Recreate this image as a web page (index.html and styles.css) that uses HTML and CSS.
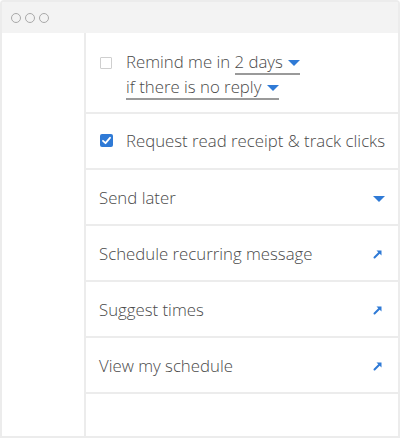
FILE: index.html
```html
<!DOCTYPE html>
<html>
<head>
<meta charset="utf-8">
<link rel="stylesheet" href="styles.css">
</head>
<body>
<div class="window">
  <div class="titlebar">
    <span class="dot"></span><span class="dot"></span><span class="dot"></span>
  </div>
  <div class="body">
    <div class="sidebar"></div>
    <div class="panel">
      <div class="row remind">
        <span class="box"></span>
        <div class="remind-text">
          <div class="line">Remind me in <span class="select">2 days <span class="caret"></span></span></div>
          <div class="line"><span class="select">if there is no reply <span class="caret"></span></span></div>
        </div>
      </div>
      <div class="row check">
        <span class="box checked">
          <svg width="13" height="13" viewBox="0 0 13 13"><path d="M3 6.8 L5.5 9.2 L10 3.8" fill="none" stroke="#fff" stroke-width="1.8" stroke-linecap="round" stroke-linejoin="round"/></svg>
        </span>
        <span class="label">Request read receipt &amp; track clicks</span>
      </div>
      <div class="row item">
        <span class="label">Send later</span>
        <span class="caret big"></span>
      </div>
      <div class="row item">
        <span class="label">Schedule recurring message</span>
        <svg class="ext" width="10" height="10" viewBox="0 0 10 10"><path d="M1.5 8.5 L7 3" stroke="#2f7ad6" stroke-width="2" stroke-linecap="round"/><path d="M3.5 1.5 H8.5 V6.5 Z" fill="#2f7ad6"/></svg>
      </div>
      <div class="row item">
        <span class="label">Suggest times</span>
        <svg class="ext" width="10" height="10" viewBox="0 0 10 10"><path d="M1.5 8.5 L7 3" stroke="#2f7ad6" stroke-width="2" stroke-linecap="round"/><path d="M3.5 1.5 H8.5 V6.5 Z" fill="#2f7ad6"/></svg>
      </div>
      <div class="row item">
        <span class="label">View my schedule</span>
        <svg class="ext" width="10" height="10" viewBox="0 0 10 10"><path d="M1.5 8.5 L7 3" stroke="#2f7ad6" stroke-width="2" stroke-linecap="round"/><path d="M3.5 1.5 H8.5 V6.5 Z" fill="#2f7ad6"/></svg>
      </div>
      <div class="filler"></div>
    </div>
  </div>
</div>
</body>
</html>
```

FILE: styles.css
```css
* { box-sizing: border-box; }
html, body { margin: 0; padding: 0; background: #fff; }
body {
  font-family: "Open Sans", "Liberation Sans", sans-serif;
  font-weight: 300;
  color: #4a4a4a;
  font-size: 16.8px;
}
.window {
  width: 400px;
  height: 438px;
  border: 2px solid #ececec;
  border-radius: 4px 4px 0 0;
  display: flex;
  flex-direction: column;
  overflow: hidden;
}
.titlebar {
  height: 31px;
  flex: none;
  background: #f3f3f3;
  display: flex;
  align-items: center;
  gap: 4px;
  padding-left: 9px;
  padding-top: 1px;
}
.dot {
  width: 10px;
  height: 10px;
  border: 1.5px solid #a9a9a9;
  border-radius: 50%;
}
.body {
  flex: 1;
  display: flex;
}
.sidebar {
  width: 84px;
  border-right: 2px solid #ececec;
  flex: none;
}
.panel {
  flex: 1;
  min-width: 0;
  display: flex;
  flex-direction: column;
}
.row {
  display: flex;
  align-items: center;
  border-bottom: 2px solid #ececec;
  padding: 1px 13px 0;
}
.label { white-space: nowrap; }
.remind {
  height: 81px;
  align-items: flex-start;
  padding-top: 16px;
}
.remind .box { margin-top: 8px; }
.remind-text { margin-left: 14px; }
.line {
  line-height: 25px;
  height: 25px;
  white-space: nowrap;
}
.select {
  display: inline-block;
  line-height: 22px;
  border-bottom: 2px solid #9a9a9a;
}
.caret {
  display: inline-block;
  width: 0;
  height: 0;
  border-left: 6px solid transparent;
  border-right: 6px solid transparent;
  border-top: 6px solid #2f7ad6;
  vertical-align: middle;
  margin-left: 1px;
  margin-top: -2px;
  flex: none;
}
.box {
  width: 12px;
  height: 12px;
  border: 1px solid #cfcfcf;
  border-radius: 1px;
  flex: none;
  margin-left: 1px;
}
.box.checked {
  width: 13px;
  height: 13px;
  border: none;
  background: #2f7ad6;
  border-radius: 2px;
  display: flex;
  margin-top: -2px;
}
.check { height: 56px; padding-top: 0; }
.check .label { margin-left: 13px; margin-top: -1px; }
.item {
  height: 56px;
  justify-content: space-between;
}
.item .caret.big { margin-top: 3px; }
.ext { margin-right: 2px; flex: none; }
.filler { flex: 1; }
```
